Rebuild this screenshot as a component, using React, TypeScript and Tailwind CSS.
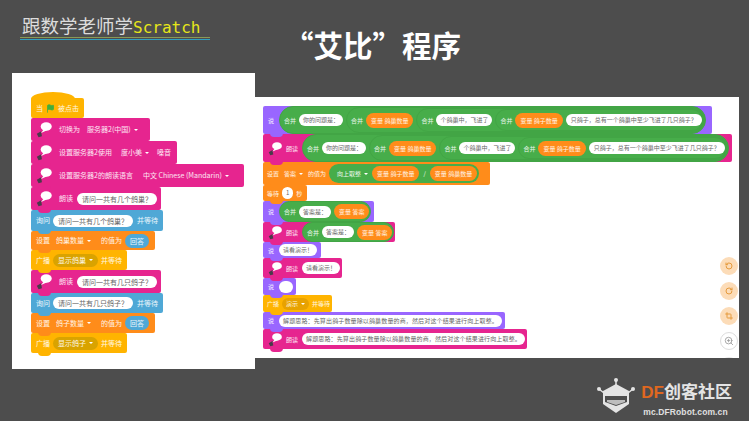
import type { ReactNode } from "react";
import { Crop, Flag, RotateCcw, RotateCw, ZoomIn } from "lucide-react";

const Label = ({ children }: { children: ReactNode }) => (
  <span className="text-white/90 whitespace-nowrap">{children}</span>
);

const Pill = ({ children, className = "" }: { children?: ReactNode; className?: string }) => (
  <span className={`bg-white text-[#666] rounded-full px-[4px] leading-[12px] h-[12px] whitespace-nowrap ${className}`}>
    {children}
  </span>
);

const Drop = ({ children, className = "" }: { children: ReactNode; className?: string }) => (
  <span className={`text-white/90 whitespace-nowrap rounded-full flex items-center gap-[3px] ${className}`}>
    {children}
    <span className="border-x-[2px] border-t-[2px] border-x-transparent border-t-white" />
  </span>
);

const Var = ({ name }: { name: string }) => (
  <span className="bg-[#ff8c1a] text-white/90 rounded-full px-[5px] h-[15px] leading-[15px] whitespace-nowrap">
    变量 {name}
  </span>
);

const Join = ({ children, className = "" }: { children: ReactNode; className?: string }) => (
  <span className={`bg-[#47ad4a] rounded-full flex items-center gap-[3px] pl-[4px] h-full border border-[#42a545] ${className}`}>
    <Label>合并</Label>
    {children}
  </span>
);

const Speaker = ({ className }: { className: string }) => (
  <svg viewBox="0 0 20 20" className={`shrink-0 ${className}`}>
    <path d="M1 15l5-3 1 6-4 1z" fill="#4a3a4a" />
    <ellipse cx="12" cy="6.5" rx="6.5" ry="5" fill="#fff" />
    <path d="M9 10l-3 4 7-3z" fill="#fff" />
  </svg>
);

type BlockProps = {
  color: string;
  size: string;
  children: ReactNode;
  notch?: boolean;
};

const Block = ({ color, size, children, notch = true }: BlockProps) => (
  <div className={`relative flex items-center rounded-[2px] ${color} ${size}`}>
    {children}
    {notch && <span className={`absolute z-10 left-[7px] -bottom-[3px] w-[13px] h-[4px] rounded-b-[4px] ${color}`} />}
  </div>
);

const SPEAK = "bg-[#e6258f]";
const ASK = "bg-[#4fa8d6]";
const SET = "bg-[#ff8c1a]";
const EVENT = "bg-[#ffb400]";
const SAY = "bg-[#9966ff]";

const LeftBlocks = () => (
  <div className="flex flex-col text-[7px] pt-[25px] pl-[19px] font-['Noto_Sans_CJK_SC',sans-serif]">
    <div className="relative w-[53px] h-[20px] z-0">
      <span className="absolute -top-[6px] left-0 w-[44px] h-[14px] rounded-[50%] bg-[#ffb400]" />
      <div className="relative h-full bg-[#ffb400] rounded-[2px] flex items-center gap-[3px] pl-[5px] text-white/90">
        当 <Flag className="w-[9px] h-[9px] text-[#3fae3f] fill-[#3fae3f]" /> 被点击
        <span className="absolute z-10 left-[7px] -bottom-[3px] w-[13px] h-[4px] rounded-b-[4px] bg-[#ffb400]" />
      </div>
    </div>
    <Block color={SPEAK} size="w-[119px] h-[23px] pl-[5px]">
      <Speaker className="w-[17px] h-[17px] mr-[6px]" />
      <Label>切换为</Label>
      <Drop className="ml-[7px]">服务器2(中国)</Drop>
    </Block>
    <Block color={SPEAK} size="w-[146px] h-[23px] pl-[5px]">
      <Speaker className="w-[17px] h-[17px] mr-[6px]" />
      <Label>设置服务器2使用</Label>
      <Drop className="ml-[9px]">度小美</Drop>
      <span className="ml-[8px]"><Label>嗓音</Label></span>
    </Block>
    <Block color={SPEAK} size="w-[213px] h-[23px] pl-[5px]">
      <Speaker className="w-[17px] h-[17px] mr-[6px]" />
      <Label>设置服务器2的朗读语言</Label>
      <Drop className="ml-[10px]">中文 Chinese (Mandarin)</Drop>
    </Block>
    <Block color={SPEAK} size="w-[130px] h-[23px] pl-[5px]">
      <Speaker className="w-[17px] h-[17px] mr-[6px]" />
      <Label>朗读</Label>
      <Pill className="ml-[4px] px-[5px]">请问一共有几个鸽巢？</Pill>
    </Block>
    <Block color={ASK} size="w-[132px] h-[21px] pl-[5px]">
      <Label>询问</Label>
      <Pill className="ml-[3px] px-[5px]">请问一共有几个鸽巢？</Pill>
      <span className="ml-[4px]"><Label>并等待</Label></span>
    </Block>
    <Block color={SET} size="w-[124px] h-[19px] pl-[5px]">
      <Label>设置</Label>
      <Drop className="ml-[6px]">鸽巢数量</Drop>
      <span className="ml-[10px]"><Label>的值为</Label></span>
      <span className="ml-[3px] bg-[#4fa8d6] text-white/90 rounded-full px-[5px] h-[14px] leading-[14px]">回答</span>
    </Block>
    <Block color={EVENT} size="w-[96px] h-[20px] pl-[5px]">
      <Label>广播</Label>
      <Drop className="ml-[3px] bg-[#d9a300] px-[5px] h-[13px]">显示鸽巢</Drop>
      <span className="ml-[3px]"><Label>并等待</Label></span>
    </Block>
    <Block color={SPEAK} size="w-[130px] h-[23px] pl-[5px]">
      <Speaker className="w-[17px] h-[17px] mr-[6px]" />
      <Label>朗读</Label>
      <Pill className="ml-[4px] px-[5px]">请问一共有几只鸽子？</Pill>
    </Block>
    <Block color={ASK} size="w-[132px] h-[20px] pl-[5px]">
      <Label>询问</Label>
      <Pill className="ml-[3px] px-[5px]">请问一共有几只鸽子？</Pill>
      <span className="ml-[4px]"><Label>并等待</Label></span>
    </Block>
    <Block color={SET} size="w-[124px] h-[20px] pl-[5px]">
      <Label>设置</Label>
      <Drop className="ml-[6px]">鸽子数量</Drop>
      <span className="ml-[10px]"><Label>的值为</Label></span>
      <span className="ml-[3px] bg-[#4fa8d6] text-white/90 rounded-full px-[5px] h-[14px] leading-[14px]">回答</span>
    </Block>
    <Block color={EVENT} size="w-[96px] h-[20px] pl-[5px]">
      <Label>广播</Label>
      <Drop className="ml-[3px] bg-[#d9a300] px-[5px] h-[13px]">显示鸽子</Drop>
      <span className="ml-[3px]"><Label>并等待</Label></span>
    </Block>
  </div>
);

const longJoin = (
  <>
    <Pill>你的问题是：</Pill>
    <Join className="h-[21px]">
      <Var name="鸽巢数量" />
      <Join className="h-[19px]">
        <Pill>个鸽巢中，飞进了</Pill>
        <Join className="h-[17px]">
          <Var name="鸽子数量" />
          <Pill className="px-[5px]">只鸽子，总有一个鸽巢中至少飞进了几只鸽子？</Pill>
        </Join>
      </Join>
    </Join>
  </>
);

const RightBlocks = () => (
  <div className="flex flex-col text-[6px] pt-[9px] pl-[8px] font-['Noto_Sans_CJK_SC',sans-serif]">
    <Block color={SAY} size="w-[449px] h-[28px] pl-[5px]">
      <Label>说</Label>
      <Join className="ml-[5px] h-[24px]">{longJoin}</Join>
    </Block>
    <Block color={SPEAK} size="w-[469px] h-[28px] pl-[5px]">
      <Speaker className="w-[15px] h-[15px] mr-[3px]" />
      <Label>朗读</Label>
      <Join className="ml-[4px] h-[24px]">{longJoin}</Join>
    </Block>
    <Block color={SET} size="w-[227px] h-[23px] pl-[4px]">
      <Label>设置</Label>
      <Drop className="ml-[5px]">答案</Drop>
      <span className="ml-[5px]"><Label>的值为</Label></span>
      <span className="ml-[3px] bg-[#47ad4a] rounded-full h-[19px] flex items-center gap-[4px] pl-[8px] pr-[2px]">
        <Drop>向上取整</Drop>
        <Var name="鸽子数量" />
        <Label>/</Label>
        <Var name="鸽巢数量" />
      </span>
    </Block>
    <Block color={SET} size="w-[44px] h-[16px] pl-[4px]">
      <Label>等待</Label>
      <Pill className="mx-[3px] px-[3px]">1</Pill>
      <Label>秒</Label>
    </Block>
    <Block color={SAY} size="w-[111px] h-[21px] pl-[5px]">
      <Label>说</Label>
      <Join className="ml-[5px] h-[18px] pr-[1px]">
        <Pill>答案是：</Pill>
        <Var name="答案" />
      </Join>
    </Block>
    <Block color={SPEAK} size="w-[132px] h-[20px] pl-[5px]">
      <Speaker className="w-[15px] h-[15px] mr-[3px]" />
      <Label>朗读</Label>
      <Join className="ml-[4px] h-[18px] pr-[1px]">
        <Pill>答案是：</Pill>
        <Var name="答案" />
      </Join>
    </Block>
    <Block color={SAY} size="w-[58px] h-[16px] pl-[5px]">
      <Label>说</Label>
      <Pill className="ml-[5px]">请看演示！</Pill>
    </Block>
    <Block color={SPEAK} size="w-[79px] h-[20px] pl-[5px]">
      <Speaker className="w-[15px] h-[15px] mr-[3px]" />
      <Label>朗读</Label>
      <Pill className="ml-[4px]">请看演示！</Pill>
    </Block>
    <Block color={SAY} size="w-[33px] h-[17px] pl-[5px]">
      <Label>说</Label>
      <Pill className="ml-[5px] w-[14px]" />
    </Block>
    <Block color={EVENT} size="w-[69px] h-[17px] pl-[4px]">
      <Label>广播</Label>
      <Drop className="ml-[3px] bg-[#e8a200] px-[4px] h-[12px]">演示</Drop>
      <span className="ml-[3px]"><Label>并等待</Label></span>
    </Block>
    <Block color={SAY} size="w-[242px] h-[17px] pl-[5px]">
      <Label>说</Label>
      <Pill className="ml-[5px] tracking-[0.14px]">解题思路：先算出鸽子数量除以鸽巢数量的商，然后对这个结果进行向上取整。</Pill>
    </Block>
    <Block color={SPEAK} size="w-[264px] h-[20px] pl-[5px]">
      <Speaker className="w-[15px] h-[15px] mr-[3px]" />
      <Label>朗读</Label>
      <Pill className="ml-[4px] tracking-[0.14px]">解题思路：先算出鸽子数量除以鸽巢数量的商，然后对这个结果进行向上取整。</Pill>
    </Block>
  </div>
);

const ToolButton = ({ children, className }: { children: ReactNode; className: string }) => (
  <span className={`w-[18px] h-[18px] rounded-full flex items-center justify-center shrink-0 ${className}`}>
    {children}
  </span>
);

const Logo = () => (
  <div className="flex items-start gap-[5px]">
    <svg viewBox="0 0 40 38" className="w-[40px] h-[38px]">
      <circle cx="20" cy="3" r="2" fill="#e4e4e4" />
      <path d="M20 3v6" stroke="#e4e4e4" strokeWidth="1.5" />
      <circle cx="3" cy="12" r="2" fill="#e4e4e4" />
      <circle cx="37" cy="12" r="2" fill="#e4e4e4" />
      <path d="M3 12l5 4M37 12l-5 4" stroke="#e4e4e4" strokeWidth="1.5" />
      <path d="M20 7l13 7v13l-13 9-13-9V14z" fill="#e4e4e4" />
      <path d="M9 19h22v6l-11 4-11-4z" fill="#4d4d4d" />
      <path d="M11 23h18v2l-9 3-9-3z" fill="#bdbdbd" />
    </svg>
    <div className="flex flex-col pt-[1px]">
      <div className="text-[17px] leading-[26px] font-bold text-[#e4e4e4] font-['Noto_Sans_CJK_SC',sans-serif]">
        <span className="text-[#e0681f] font-['Liberation_Sans',sans-serif]">DF</span>创客社区
      </div>
      <div className="text-[8.5px] leading-[12px] font-bold text-[#e0e0e0] tracking-[0.1px] pl-[2px] font-['Liberation_Sans',sans-serif]">
        mc.DFRobot.com.cn
      </div>
    </div>
  </div>
);

export default function App() {
  return (
    <div className="w-[749px] h-[421px] bg-[#4d4d4d] overflow-hidden flex flex-col">
      <header className="h-[73px] flex items-start shrink-0">
        <div className="ml-[20px] mt-[15px] w-[190px]">
          <div className="pl-[2px] text-[18.5px] leading-[20px] text-[#dcdcdc] font-['Noto_Sans_CJK_SC',sans-serif] whitespace-nowrap">
            跟数学老师学<span className="text-[#e6e619] font-['DejaVu_Sans_Mono',monospace] text-[16px]">Scratch</span>
          </div>
          <div className="h-[1px] bg-[#8a9a55] mt-[-1px]" />
          <div className="h-[1px] bg-[#2f9fc0] mt-[1px]" />
        </div>
        <h1 className="ml-[74px] mt-[27px] text-[29.5px] leading-[34px] font-bold text-white whitespace-nowrap font-['Noto_Sans_CJK_SC',sans-serif]">
          “艾比”程序
        </h1>
      </header>
      <main className="flex items-start pl-[12px] h-[296px] shrink-0">
        <section className="relative z-10 w-[243px] h-[296px] bg-white shrink-0">
          <LeftBlocks />
        </section>
        <section className="relative mt-[24px] w-[484px] h-[261px] bg-white shrink-0 overflow-hidden">
          <RightBlocks />
          <div className="absolute right-[1px] top-[160px] flex flex-col gap-[7px]">
            <ToolButton className="bg-[#fcdcb8]"><RotateCcw className="w-[8px] h-[8px] text-[#e59a3c]" strokeWidth={3} /></ToolButton>
            <ToolButton className="bg-[#fcdcb8]"><RotateCw className="w-[8px] h-[8px] text-[#e59a3c]" strokeWidth={3} /></ToolButton>
            <ToolButton className="bg-[#fcdcb8]"><Crop className="w-[8px] h-[8px] text-[#e59a3c]" strokeWidth={3} /></ToolButton>
            <ToolButton className="border border-[#dddddd]"><ZoomIn className="w-[10px] h-[10px] text-[#999]" /></ToolButton>
            <ToolButton className="border border-[#e5e5e5]"><span /></ToolButton>
          </div>
        </section>
      </main>
      <footer className="flex justify-end pr-[17px] pt-[8px]">
        <Logo />
      </footer>
    </div>
  );
}
